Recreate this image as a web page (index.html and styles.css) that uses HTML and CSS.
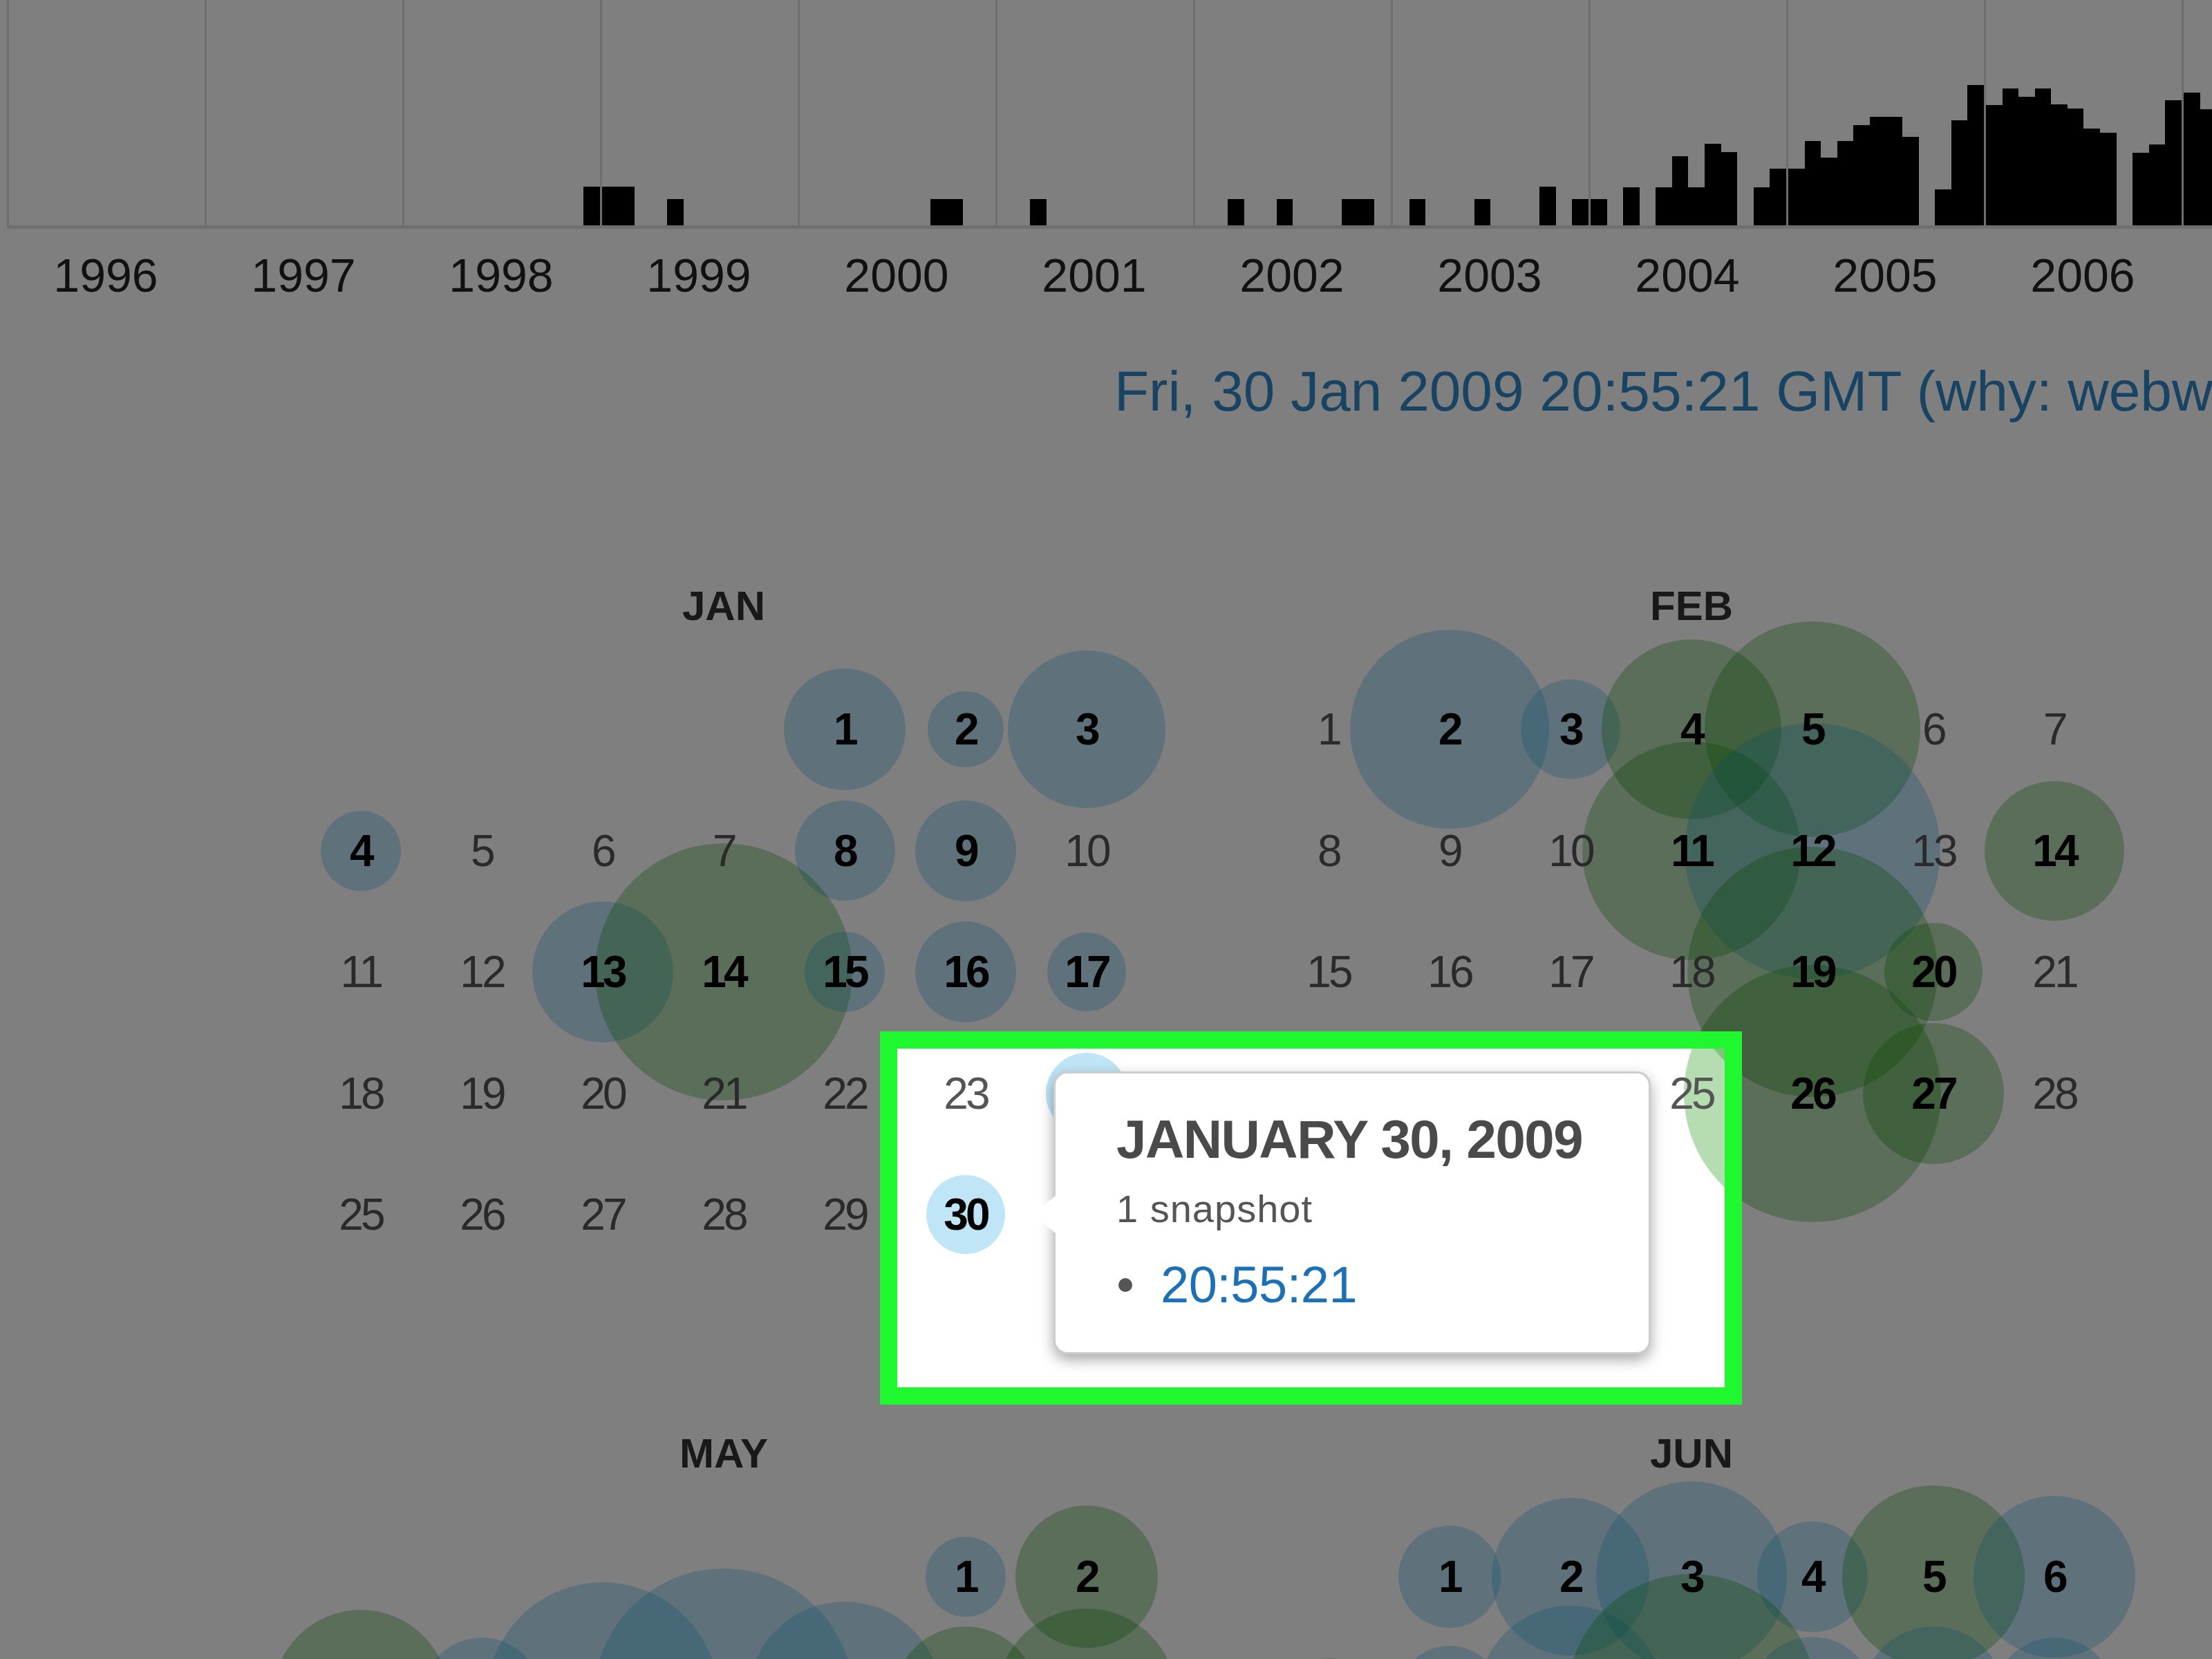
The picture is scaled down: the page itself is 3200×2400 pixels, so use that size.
FILE: index.html
```html
<!DOCTYPE html>
<html lang="en">
<head>
<meta charset="utf-8">
<title>Wayback Machine calendar</title>
<link rel="stylesheet" href="styles.css">
</head>
<body>
<div class="page">
  <div class="spark">
    <div class="yr"><i></i><i></i><i></i><i></i><i></i><i></i><i></i><i></i><i></i><i></i><i></i><i></i></div>
    <div class="yr"><i></i><i></i><i></i><i></i><i></i><i></i><i></i><i></i><i></i><i></i><i></i><i></i></div>
    <div class="yr"><i></i><i></i><i></i><i></i><i></i><i></i><i></i><i></i><i></i><i></i><i></i><i style="--h:56px"></i></div>
    <div class="yr"><i style="--h:56px"></i><i style="--h:56px"></i><i></i><i></i><i style="--h:38px"></i><i></i><i></i><i></i><i></i><i></i><i></i><i></i></div>
    <div class="yr"><i></i><i></i><i></i><i></i><i></i><i></i><i></i><i></i><i style="--h:38px"></i><i style="--h:38px"></i><i></i><i></i></div>
    <div class="yr"><i></i><i></i><i style="--h:38px"></i><i></i><i></i><i></i><i></i><i></i><i></i><i></i><i></i><i></i></div>
    <div class="yr"><i></i><i></i><i style="--h:38px"></i><i></i><i></i><i style="--h:38px"></i><i></i><i></i><i></i><i style="--h:38px"></i><i style="--h:38px"></i><i></i></div>
    <div class="yr"><i></i><i style="--h:38px"></i><i></i><i></i><i></i><i style="--h:38px"></i><i></i><i></i><i></i><i style="--h:56px"></i><i></i><i style="--h:38px"></i></div>
    <div class="yr"><i style="--h:38px"></i><i></i><i style="--h:55px"></i><i></i><i style="--h:55px"></i><i style="--h:100px"></i><i style="--h:55px"></i><i style="--h:118px"></i><i style="--h:106px"></i><i></i><i style="--h:55px"></i><i style="--h:82px"></i></div>
    <div class="yr"><i style="--h:82px"></i><i style="--h:122px"></i><i style="--h:98px"></i><i style="--h:122px"></i><i style="--h:145px"></i><i style="--h:157px"></i><i style="--h:157px"></i><i style="--h:128px"></i><i></i><i style="--h:52px"></i><i style="--h:152px"></i><i style="--h:203px"></i></div>
    <div class="yr"><i style="--h:174px"></i><i style="--h:198px"></i><i style="--h:186px"></i><i style="--h:198px"></i><i style="--h:175px"></i><i style="--h:169px"></i><i style="--h:140px"></i><i style="--h:134px"></i><i></i><i style="--h:105px"></i><i style="--h:117px"></i><i style="--h:181px"></i></div>
    <div class="yr"><i style="--h:192px"></i><i style="--h:168px"></i><i style="--h:170px"></i><i style="--h:180px"></i><i style="--h:160px"></i><i style="--h:150px"></i><i style="--h:140px"></i><i style="--h:150px"></i><i style="--h:130px"></i><i style="--h:120px"></i><i style="--h:140px"></i><i style="--h:160px"></i></div>
  </div>
  <div class="labels">
    <span>1996</span><span>1997</span><span>1998</span><span>1999</span><span>2000</span><span>2001</span><span>2002</span><span>2003</span><span>2004</span><span>2005</span><span>2006</span><span>2007</span>
  </div>

  <div class="capture">Fri, 30 Jan 2009 20:55:21 GMT (why: webwide crawl)</div>

  <div class="cal">
    <div class="month">
      <div class="mname">JAN</div>
      <div class="days">
        <div></div><div></div><div></div><div></div>
        <div class="d s"><i class="c b" style="--d:176px"></i><span class="n">1</span></div>
        <div class="d s"><i class="c b" style="--d:110px"></i><span class="n">2</span></div>
        <div class="d s"><i class="c b" style="--d:228px"></i><span class="n">3</span></div>
        <div class="d s"><i class="c b" style="--d:116px"></i><span class="n">4</span></div>
        <div class="d"><span class="n">5</span></div>
        <div class="d"><span class="n">6</span></div>
        <div class="d"><span class="n">7</span></div>
        <div class="d s"><i class="c b" style="--d:145px"></i><span class="n">8</span></div>
        <div class="d s"><i class="c b" style="--d:146px"></i><span class="n">9</span></div>
        <div class="d"><span class="n">10</span></div>
        <div class="d"><span class="n">11</span></div>
        <div class="d"><span class="n">12</span></div>
        <div class="d s"><i class="c b" style="--d:204px"></i><span class="n">13</span></div>
        <div class="d s"><i class="c g" style="--d:372px"></i><span class="n">14</span></div>
        <div class="d s"><i class="c b" style="--d:116px"></i><span class="n">15</span></div>
        <div class="d s"><i class="c b" style="--d:146px"></i><span class="n">16</span></div>
        <div class="d s"><i class="c b" style="--d:114px"></i><span class="n">17</span></div>
        <div class="d"><span class="n">18</span></div>
        <div class="d"><span class="n">19</span></div>
        <div class="d"><span class="n">20</span></div>
        <div class="d"><span class="n">21</span></div>
        <div class="d"><span class="n">22</span></div>
        <div class="d"><span class="n">23</span></div>
        <div class="d s"><i class="c b" style="--d:118px"></i><span class="n cov">24</span></div>
        <div class="d"><span class="n">25</span></div>
        <div class="d"><span class="n">26</span></div>
        <div class="d"><span class="n">27</span></div>
        <div class="d"><span class="n">28</span></div>
        <div class="d"><span class="n">29</span></div>
        <div class="d s"><i class="c b" style="--d:114px"></i><span class="n">30</span></div>
        <div class="d s"><i class="c b" style="--d:100px"></i><span class="n cov">31</span></div>
      </div>
    </div>

    <div class="month">
      <div class="mname">FEB</div>
      <div class="days">
        <div class="d"><span class="n">1</span></div>
        <div class="d s"><i class="c b" style="--d:288px"></i><span class="n">2</span></div>
        <div class="d s"><i class="c b" style="--d:144px"></i><span class="n">3</span></div>
        <div class="d s"><i class="c g" style="--d:260px"></i><span class="n">4</span></div>
        <div class="d s"><i class="c g" style="--d:312px"></i><span class="n">5</span></div>
        <div class="d"><span class="n">6</span></div>
        <div class="d"><span class="n">7</span></div>
        <div class="d"><span class="n">8</span></div>
        <div class="d"><span class="n">9</span></div>
        <div class="d"><span class="n">10</span></div>
        <div class="d s"><i class="c g" style="--d:316px"></i><span class="n">11</span></div>
        <div class="d s"><i class="c b" style="--d:370px"></i><span class="n">12</span></div>
        <div class="d"><span class="n">13</span></div>
        <div class="d s"><i class="c g" style="--d:202px"></i><span class="n">14</span></div>
        <div class="d"><span class="n">15</span></div>
        <div class="d"><span class="n">16</span></div>
        <div class="d"><span class="n">17</span></div>
        <div class="d"><span class="n">18</span></div>
        <div class="d s"><i class="c g" style="--d:362px"></i><span class="n">19</span></div>
        <div class="d s"><i class="c g" style="--d:142px"></i><span class="n">20</span></div>
        <div class="d"><span class="n">21</span></div>
        <div class="d"><span class="n cov">22</span></div>
        <div class="d"><span class="n cov">23</span></div>
        <div class="d"><span class="n cov">24</span></div>
        <div class="d"><span class="n">25</span></div>
        <div class="d s"><i class="c g" style="--d:372px"></i><span class="n">26</span></div>
        <div class="d s"><i class="c g" style="--d:204px"></i><span class="n">27</span></div>
        <div class="d"><span class="n">28</span></div>
      </div>
    </div>

    <div class="month">
      <div class="mname">MAY</div>
      <div class="days">
        <div></div><div></div><div></div><div></div><div></div>
        <div class="d s"><i class="c b" style="--d:116px"></i><span class="n">1</span></div>
        <div class="d s"><i class="c g" style="--d:206px"></i><span class="n">2</span></div>
        <div class="d s"><i class="c g" style="--d:256px"></i><span class="n">3</span></div>
        <div class="d s"><i class="c b" style="--d:176px"></i><span class="n">4</span></div>
        <div class="d s"><i class="c b" style="--d:336px"></i><span class="n">5</span></div>
        <div class="d s"><i class="c b" style="--d:376px"></i><span class="n">6</span></div>
        <div class="d s"><i class="c b" style="--d:280px"></i><span class="n">7</span></div>
        <div class="d s"><i class="c g" style="--d:208px"></i><span class="n">8</span></div>
        <div class="d s"><i class="c g" style="--d:260px"></i><span class="n">9</span></div>
        <div class="d"><span class="n">10</span></div>
        <div class="d"><span class="n">11</span></div>
        <div class="d"><span class="n">12</span></div>
        <div class="d"><span class="n">13</span></div>
        <div class="d"><span class="n">14</span></div>
        <div class="d"><span class="n">15</span></div>
        <div class="d"><span class="n">16</span></div>
        <div class="d"><span class="n">17</span></div>
        <div class="d"><span class="n">18</span></div>
        <div class="d"><span class="n">19</span></div>
        <div class="d"><span class="n">20</span></div>
        <div class="d"><span class="n">21</span></div>
        <div class="d"><span class="n">22</span></div>
        <div class="d"><span class="n">23</span></div>
        <div class="d"><span class="n">24</span></div>
        <div class="d"><span class="n">25</span></div>
        <div class="d"><span class="n">26</span></div>
        <div class="d"><span class="n">27</span></div>
        <div class="d"><span class="n">28</span></div>
        <div class="d"><span class="n">29</span></div>
        <div class="d"><span class="n">30</span></div>
        <div class="d"><span class="n">31</span></div>
      </div>
    </div>

    <div class="month">
      <div class="mname">JUN</div>
      <div class="days">
        <div></div>
        <div class="d s"><i class="c b" style="--d:148px"></i><span class="n">1</span></div>
        <div class="d s"><i class="c b" style="--d:228px"></i><span class="n">2</span></div>
        <div class="d s"><i class="c b" style="--d:276px"></i><span class="n">3</span></div>
        <div class="d s"><i class="c b" style="--d:160px"></i><span class="n">4</span></div>
        <div class="d s"><i class="c g" style="--d:264px"></i><span class="n">5</span></div>
        <div class="d s"><i class="c b" style="--d:234px"></i><span class="n">6</span></div>
        <div class="d s"><i class="c b" style="--d:116px"></i><span class="n">7</span></div>
        <div class="d s"><i class="c b" style="--d:152px"></i><span class="n">8</span></div>
        <div class="d s"><i class="c b" style="--d:268px"></i><span class="n">9</span></div>
        <div class="d s"><i class="c g" style="--d:360px"></i><span class="n">10</span></div>
        <div class="d s"><i class="c b" style="--d:178px"></i><span class="n">11</span></div>
        <div class="d s"><i class="c b" style="--d:208px"></i><span class="n">12</span></div>
        <div class="d s"><i class="c b" style="--d:176px"></i><span class="n">13</span></div>
        <div class="d"><span class="n">14</span></div>
        <div class="d"><span class="n">15</span></div>
        <div class="d"><span class="n">16</span></div>
        <div class="d"><span class="n">17</span></div>
        <div class="d"><span class="n">18</span></div>
        <div class="d"><span class="n">19</span></div>
        <div class="d"><span class="n">20</span></div>
        <div class="d"><span class="n">21</span></div>
        <div class="d"><span class="n">22</span></div>
        <div class="d"><span class="n">23</span></div>
        <div class="d"><span class="n">24</span></div>
        <div class="d"><span class="n">25</span></div>
        <div class="d"><span class="n">26</span></div>
        <div class="d"><span class="n">27</span></div>
        <div class="d"><span class="n">28</span></div>
        <div class="d"><span class="n">29</span></div>
        <div class="d"><span class="n">30</span></div>
      </div>
    </div>
  </div>

  <div class="tip">
    <h3 class="tip-title">JANUARY 30, 2009</h3>
    <div class="tip-count">1 snapshot</div>
    <div class="tip-row"><span class="tip-dot"></span><span class="tip-time">20:55:21</span></div>
  </div>

  <div class="spot"></div>
</div>
</body>
</html>
```

FILE: styles.css
```css
* { box-sizing: border-box; }
html, body { margin: 0; padding: 0; }
body {
  width: 3200px;
  height: 2400px;
  overflow: hidden;
  background: #fff;
  font-family: "Liberation Sans", Arial, Helvetica, sans-serif;
  color: #333;
}
.page {
  position: relative;
  width: 3200px;
  height: 2400px;
  overflow: hidden;
}

/* sparkline */
.spark {
  display: flex;
  width: max-content;
  margin-left: 10px;
  border-bottom: 5px solid #dedede;
}
.yr {
  flex: 0 0 286px;
  height: 326px;
  border-left: 3px solid #dcdcdc;
  display: flex;
  align-items: flex-end;
}
.yr i {
  flex: 1 1 0;
  height: var(--h, 0px);
  background: #000;
}
.labels {
  display: flex;
  width: max-content;
  margin: 27px 0 0 10px;
}
.labels span {
  flex: 0 0 286px;
  text-align: center;
  font-size: 68px;
  line-height: 80px;
  color: #222;
}

/* capture line */
.capture {
  margin: 82px 0 0 1612px;
  font-size: 82px;
  line-height: 92px;
  color: #3287c4;
  white-space: nowrap;
}

/* calendar */
.cal {
  display: grid;
  grid-template-columns: repeat(2, 1225px);
  column-gap: 175px;
  row-gap: 37.5px;
  margin: 220px 0 0 434.5px;
}
.month { height: 1188.5px; }
.mname {
  height: 90px;
  line-height: 90px;
  text-align: center;
  font-weight: bold;
  font-size: 60px;
  color: #333;
}
.days {
  display: grid;
  grid-template-columns: repeat(7, 175px);
  grid-auto-rows: 175.5px;
  margin-top: 45.5px;
}
.d {
  position: relative;
  display: flex;
  align-items: center;
  justify-content: center;
  font-size: 64px;
  color: #555;
  letter-spacing: -0.06em;
}
.d .n { position: relative; z-index: 2; }
.d .n.cov { visibility: hidden; }
.d.s { color: #000; font-weight: bold; }
.c {
  position: absolute;
  left: 50%;
  top: 50%;
  width: var(--d);
  height: var(--d);
  margin: calc(var(--d) / -2) 0 0 calc(var(--d) / -2);
  border-radius: 50%;
  z-index: 1;
}
.c.b { background: rgba(0, 150, 220, 0.25); }
.c.g { background: rgba(12, 138, 0, 0.3); }

/* tooltip */
.tip {
  position: absolute;
  left: 1524px;
  top: 1550px;
  width: 864px;
  height: 409px;
  background: #fff;
  border: 3px solid #cdcdcd;
  border-radius: 20px;
  box-shadow: 0 8px 20px rgba(0, 0, 0, 0.35);
  padding: 50px 0 0 88px;
  z-index: 10;
}
.tip::before {
  content: "";
  position: absolute;
  left: -34px;
  top: 177px;
  border-style: solid;
  border-width: 27px 34px 27px 0;
  border-color: transparent #fff transparent transparent;
}
.tip-title {
  margin: 0;
  font-size: 78px;
  line-height: 90px;
  font-weight: bold;
  color: #4a4a4a;
  letter-spacing: -1.5px;
}
.tip-count {
  margin-top: 23.6px;
  font-size: 56px;
  line-height: 64px;
  color: #555;
  letter-spacing: 1px;
}
.tip-row {
  display: flex;
  align-items: center;
  height: 90px;
  margin-top: 33.8px;
}
.tip-dot {
  width: 20px;
  height: 20px;
  border-radius: 50%;
  background: #555;
  margin: 0 41px 0 3px;
}
.tip-time {
  font-size: 74px;
  line-height: 90px;
  color: #1c70b5;
  letter-spacing: -0.5px;
}

/* highlight */
.spot {
  position: absolute;
  left: 1273px;
  top: 1492px;
  width: 1247px;
  height: 540px;
  border: 25px solid #1ff82e;
  box-shadow: 0 0 0 5000px rgba(0, 0, 0, 0.5);
  z-index: 20;
  pointer-events: none;
}
```
